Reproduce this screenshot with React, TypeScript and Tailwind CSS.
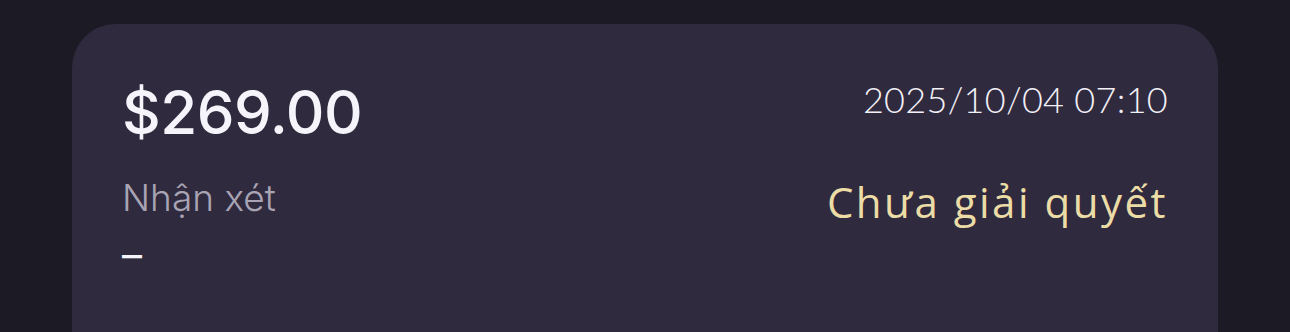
import React from 'react'

export default function App() {
    return (
        <div className="w-[1290px] h-[332px] overflow-hidden bg-[#1c1a25] px-[72px] pt-[24px] font-['Inter',sans-serif]">
            <div className="h-[360px] rounded-[44px] bg-[#302a3f] px-[50px] pt-[52px]">
                <div className="flex justify-between items-start">
                    <div className="text-[60px] leading-[72px] font-medium text-[#f6f4fb] tracking-[-0.5px]">
                        $269.00
                    </div>
                    <div className="mt-[1px] text-[36px] leading-[44px] text-[#f3f1f8] font-['Lato',sans-serif] font-light tracking-[0.3px]">
                        2025/10/04 07:10
                    </div>
                </div>
                <div className="flex justify-between items-start mt-[29px]">
                    <div className="flex flex-col">
                        <span className="text-[37px] leading-[42px] text-[#a9a4b4] font-light">Nhận xét</span>
                        <span className="text-[40px] leading-[44px] text-[#f6f4fb] mt-[14px]">–</span>
                    </div>
                    <div className="-mt-[1px] text-[42px] leading-[52px] text-[#ecdca6] font-['Open_Sans',sans-serif] font-medium tracking-[2.5px]">
                        Chưa giải quyết
                    </div>
                </div>
            </div>
        </div>
    )
}
